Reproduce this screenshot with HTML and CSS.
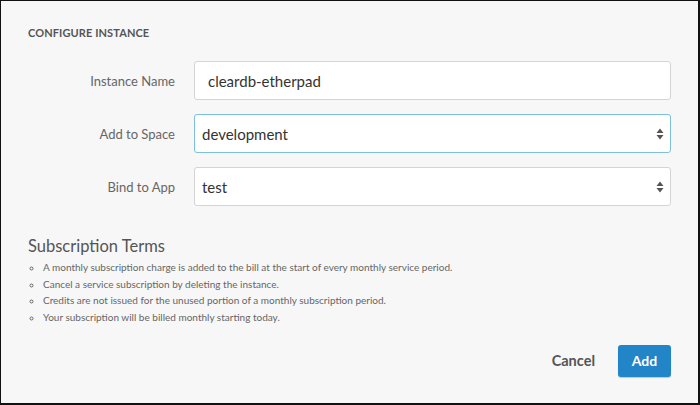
FILE: index.html
```html
<!DOCTYPE html>
<html>
<head>
<meta charset="utf-8">
<link rel="stylesheet" href="styles.css">
</head>
<body>
<div class="frame">
  <h2 class="section-title">CONFIGURE INSTANCE</h2>
  <div class="form">
    <div class="row">
      <label class="label">Instance Name</label>
      <div class="field text-field">cleardb-etherpad</div>
    </div>
    <div class="row">
      <label class="label">Add to Space</label>
      <div class="field select-field focused">
        <span>development</span>
        <svg class="arrows" width="8" height="12" viewBox="0 0 8 12"><path d="M4 0.5 L7.5 5 H0.5 Z M4 11.5 L7.5 7 H0.5 Z" fill="#555"/></svg>
      </div>
    </div>
    <div class="row">
      <label class="label">Bind to App</label>
      <div class="field select-field">
        <span>test</span>
        <svg class="arrows" width="8" height="12" viewBox="0 0 8 12"><path d="M4 0.5 L7.5 5 H0.5 Z M4 11.5 L7.5 7 H0.5 Z" fill="#555"/></svg>
      </div>
    </div>
  </div>
  <h3 class="terms-title">Subscription Terms</h3>
  <ul class="terms">
    <li>A monthly subscription charge is added to the bill at the start of every monthly service period.</li>
    <li>Cancel a service subscription by deleting the instance.</li>
    <li>Credits are not issued for the unused portion of a monthly subscription period.</li>
    <li>Your subscription will be billed monthly starting today.</li>
  </ul>
  <div class="actions">
    <button class="btn-cancel">Cancel</button>
    <button class="btn-add">Add</button>
  </div>
</div>
</body>
</html>
```
FILE: styles.css
```css
html, body {
  margin: 0;
  padding: 0;
}
body {
  font-family: Lato, "Liberation Sans", sans-serif;
  color: #555;
}
.frame {
  width: 700px;
  height: 405px;
  box-sizing: border-box;
  background: #f7f7f7;
  border-style: solid;
  border-color: #111;
  border-width: 1px 2px 2px 1px;
  padding: 25px 27px 0 27px;
  display: flex;
  flex-direction: column;
}
.section-title {
  margin: 0;
  font-size: 11px;
  font-weight: 700;
  letter-spacing: 0.1px;
  line-height: 14px;
  color: #555;
}
.form {
  margin-top: 21px;
  display: flex;
  flex-direction: column;
  gap: 14px;
}
.row {
  display: flex;
  align-items: center;
}
.label {
  width: 147px;
  text-align: right;
  font-size: 13px;
  color: #666;
  padding-right: 19px;
  box-sizing: content-box;
}
.field {
  flex: 1;
  height: 39px;
  box-sizing: border-box;
  background: #fff;
  border: 1px solid #d4d4d4;
  border-radius: 3px;
  display: flex;
  align-items: center;
  font-size: 15px;
  color: #333;
}
.text-field {
  padding-left: 13px;
}
.select-field {
  padding-left: 7px;
  padding-right: 6px;
  justify-content: space-between;
}
.focused {
  border-color: #7fbfde;
}
.terms-title {
  margin: 30px 0 0 0;
  font-size: 16.5px;
  font-weight: 400;
  line-height: 20px;
  color: #555;
}
.terms {
  margin: 3px 0 0 0;
  padding: 0 0 0 15px;
  list-style: circle;
  font-size: 10px;
  line-height: 16.7px;
  color: #666;
}
.terms li {
  padding-left: 0;
}
.actions {
  margin-top: 19px;
  display: flex;
  justify-content: flex-end;
  align-items: center;
  gap: 23px;
}
.btn-cancel {
  background: none;
  border: none;
  padding: 0;
  font-family: inherit;
  font-size: 14.5px;
  font-weight: 700;
  color: #555;
}
.btn-add {
  width: 53px;
  height: 32px;
  background: #2185c8;
  border: none;
  border-radius: 3px;
  box-shadow: 0 1px 1px rgba(0,0,0,0.2);
  color: #fff;
  font-family: inherit;
  font-size: 14px;
  font-weight: 700;
}
```
